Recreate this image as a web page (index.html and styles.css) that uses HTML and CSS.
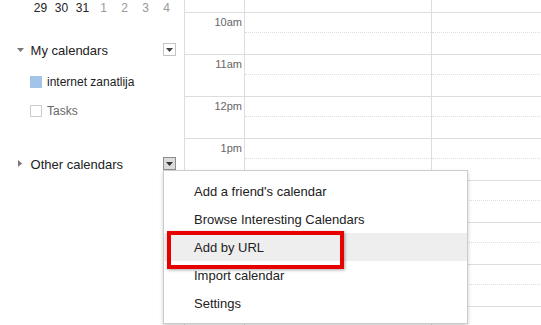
FILE: index.html
```html
<!DOCTYPE html>
<html lang="en">
<head>
    <meta charset="UTF-8">
    <title>Calendar</title>
    <link rel="stylesheet" href="styles.css">
</head>
<body>
    <div class="page">
        <aside class="sidebar">
            <div class="mini-week">
                <span>29</span><span>30</span><span>31</span>
                <span class="next">1</span><span class="next">2</span><span class="next">3</span><span class="next">4</span>
            </div>

            <div class="cal-head">
                <span class="twisty"><svg width="7" height="4" viewBox="0 0 7 4"><polygon points="0,0 7,0 3.5,4" fill="#777"/></svg></span>
                <span class="cal-title">My calendars</span>
                <span class="menu-btn"><svg width="7" height="4" viewBox="0 0 7 4"><polygon points="0,0 7,0 3.5,4" fill="#444"/></svg></span>
            </div>
            <ul class="cal-list">
                <li class="cal-item"><span class="swatch blue"></span>internet zanatlija</li>
                <li class="cal-item muted"><span class="swatch"></span>Tasks</li>
            </ul>

            <div class="cal-head other">
                <span class="twisty"><svg width="4" height="7" viewBox="0 0 4 7"><polygon points="0,0 4,3.5 0,7" fill="#777"/></svg></span>
                <span class="cal-title">Other calendars</span>
                <span class="menu-wrap">
                    <span class="menu-btn active"><svg width="7" height="4" viewBox="0 0 7 4"><polygon points="0,0 7,0 3.5,4" fill="#333"/></svg></span>
                    <ul class="dropdown">
                        <li>Add a friend's calendar</li>
                        <li>Browse Interesting Calendars</li>
                        <li class="hover">Add by URL<span class="mark"></span></li>
                        <li>Import calendar</li>
                        <li>Settings</li>
                    </ul>
                </span>
            </div>
        </aside>

        <main class="grid">
            <div class="row partial"><div class="time"></div><div class="cell"></div><div class="cell"></div></div>
            <div class="row"><div class="time">10am</div><div class="cell"><div class="half"></div></div><div class="cell"><div class="half"></div></div></div>
            <div class="row"><div class="time">11am</div><div class="cell"><div class="half"></div></div><div class="cell"><div class="half"></div></div></div>
            <div class="row"><div class="time">12pm</div><div class="cell"><div class="half"></div></div><div class="cell"><div class="half"></div></div></div>
            <div class="row"><div class="time">1pm</div><div class="cell"><div class="half"></div></div><div class="cell"><div class="half"></div></div></div>
            <div class="row"><div class="time">2pm</div><div class="cell"><div class="half"></div></div><div class="cell"><div class="half"></div></div></div>
            <div class="row"><div class="time">3pm</div><div class="cell"><div class="half"></div></div><div class="cell"><div class="half"></div></div></div>
            <div class="row"><div class="time">4pm</div><div class="cell"><div class="half"></div></div><div class="cell"><div class="half"></div></div></div>
            <div class="row"><div class="time">5pm</div><div class="cell"><div class="half"></div></div><div class="cell"><div class="half"></div></div></div>
        </main>
    </div>
</body>
</html>
```

FILE: styles.css
```css
body {
    margin: 0;
    font-family: "Liberation Sans", Arial, sans-serif;
    color: #222;
    background: #fff;
    overflow: hidden;
}
.page {
    display: flex;
    height: 325px;
    overflow: hidden;
}

/* left column */
.sidebar {
    width: 184px;
    flex: none;
}
.mini-week {
    display: grid;
    grid-template-columns: repeat(7, 21px);
    padding-left: 30px;
    font-size: 12px;
    line-height: 16px;
    text-align: center;
    color: #222;
}
.mini-week .next {
    color: #999;
}
.cal-head {
    display: flex;
    align-items: center;
    height: 19px;
    margin-top: 24px;
    padding: 0 8px 0 17px;
    font-size: 13px;
}
.cal-head.other {
    margin-top: 29px;
}
.twisty {
    width: 13.6px;
    display: flex;
    align-items: center;
}
.cal-head.other .twisty svg {
    margin-left: 1px;
}
.cal-title {
    flex: 1;
    padding-top: 2px;
}
.menu-btn {
    width: 13px;
    height: 13px;
    box-sizing: border-box;
    border: 1px solid #c4c4c4;
    background: #fff;
    display: flex;
    align-items: center;
    justify-content: center;
}
.menu-btn.active {
    background: #dcdcdc;
    border-color: #8e8e8e;
}
.cal-list {
    list-style: none;
    margin: 0;
    padding: 8px 0 0 30px;
    font-size: 12px;
}
.cal-item {
    display: flex;
    align-items: center;
    height: 29px;
    gap: 5px;
}
.cal-item.muted {
    color: #666;
}
.swatch {
    width: 12px;
    height: 12px;
    box-sizing: border-box;
    border: 1px solid #ccc;
    background: #fff;
}
.swatch.blue {
    background: #a2c4e9;
    border-color: #a2c4e9;
}

/* dropdown menu */
.menu-wrap {
    position: relative;
}
.dropdown {
    position: absolute;
    top: 13px;
    left: 0;
    z-index: 10;
    width: 305px;
    height: 154px;
    box-sizing: border-box;
    margin: 0;
    padding: 6px 0;
    list-style: none;
    background: #fff;
    border: 1px solid #ccc;
    box-shadow: 0 2px 4px rgba(0,0,0,0.2);
    font-size: 13px;
    color: #222;
}
.dropdown li {
    height: 28px;
    line-height: 29px;
    padding-left: 30px;
    position: relative;
}
.dropdown li.hover {
    background: #eee;
}
.mark {
    position: absolute;
    left: 3px;
    top: -2px;
    width: 177px;
    height: 38px;
    box-sizing: border-box;
    border: 4px solid #e60000;
    box-shadow: 1px 1px 3px rgba(0,0,0,0.35);
}

/* day grid */
.grid {
    flex: 1;
}
.row {
    display: flex;
    height: 42px;
    box-sizing: border-box;
    border-top: 1px solid #ddd;
}
.row.partial {
    height: 12px;
    border-top: none;
}
.time {
    width: 60px;
    flex: none;
    box-sizing: border-box;
    border-left: 1px solid #ddd;
    padding: 3px 2px 0 0;
    text-align: right;
    font-size: 11px;
    color: #666;
}
.cell {
    width: 187px;
    flex: none;
    box-sizing: border-box;
    border-left: 1px solid #ddd;
}
.cell:last-child {
    flex: 1;
}
.half {
    height: 20px;
    box-sizing: border-box;
    border-bottom: 1px dotted #ddd;
}
```
